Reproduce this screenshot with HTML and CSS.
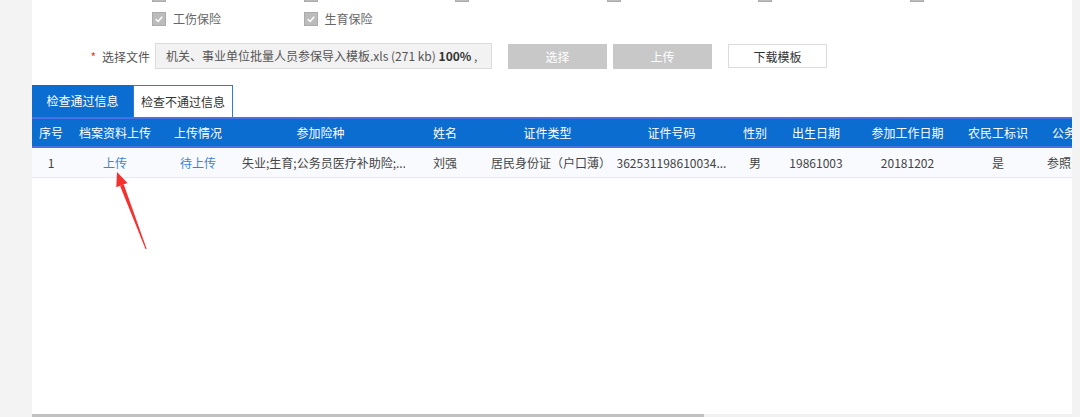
FILE: index.html
```html
<!DOCTYPE html>
<html lang="zh-CN">
<head>
<meta charset="utf-8">
<title>参保导入</title>
<link rel="stylesheet" href="styles.css">
</head>
<body>
<div class="page">
  <div class="gutter"></div>
  <main class="panel">
    <div class="checks">
      <span class="chk"><span class="box"><svg viewBox="0 0 13 13"><path d="M3 6.8 L5.5 9.2 L10 4" /></svg></span></span>
      <span class="chk"><span class="box"><svg viewBox="0 0 13 13"><path d="M3 6.8 L5.5 9.2 L10 4" /></svg></span></span>
      <span class="chk"><span class="box"><svg viewBox="0 0 13 13"><path d="M3 6.8 L5.5 9.2 L10 4" /></svg></span></span>
      <span class="chk"><span class="box"><svg viewBox="0 0 13 13"><path d="M3 6.8 L5.5 9.2 L10 4" /></svg></span></span>
      <span class="chk"><span class="box"><svg viewBox="0 0 13 13"><path d="M3 6.8 L5.5 9.2 L10 4" /></svg></span></span>
      <span class="chk"><span class="box"><svg viewBox="0 0 13 13"><path d="M3 6.8 L5.5 9.2 L10 4" /></svg></span></span>
      <label class="chk"><span class="box"><svg viewBox="0 0 13 13"><path d="M3 6.8 L5.5 9.2 L10 4" /></svg></span><span>工伤保险</span></label>
      <label class="chk"><span class="box"><svg viewBox="0 0 13 13"><path d="M3 6.8 L5.5 9.2 L10 4" /></svg></span><span>生育保险</span></label>
    </div>

    <div class="filerow">
      <div class="flabel"><span class="req">*</span>选择文件</div>
      <div class="finput">机关、事业单位批量人员参保导入模板.xls (271 kb) <b>100%</b> ,</div>
      <button class="btn btn-dis btn-first">选择</button>
      <button class="btn btn-dis">上传</button>
      <button class="btn btn-plain">下载模板</button>
    </div>

    <div class="tabs">
      <div class="tab tab-on">检查通过信息</div>
      <div class="tab tab-off">检查不通过信息</div>
    </div>

    <div class="tablewrap">
      <table class="grid">
        <colgroup>
          <col class="w38"><col class="w90"><col class="w76"><col class="w169"><col class="w80"><col class="w125"><col class="w123"><col class="w44"><col class="w78"><col class="w105"><col class="w76"><col class="w110">
        </colgroup>
        <thead>
          <tr>
            <th>序号</th><th>档案资料上传</th><th>上传情况</th><th>参加险种</th><th>姓名</th><th>证件类型</th><th>证件号码</th><th>性别</th><th>出生日期</th><th>参加工作日期</th><th>农民工标识</th><th class="left">公务员类别</th>
          </tr>
        </thead>
        <tbody>
          <tr>
            <td>1</td><td><a class="lnk">上传</a></td><td><a class="lnk">待上传</a></td><td>失业;生育;公务员医疗补助险;...</td><td>刘强</td><td>居民身份证（户口薄）</td><td>362531198610034...</td><td>男</td><td>19861003</td><td>20181202</td><td>是</td><td class="left">参照公务员法管理</td>
          </tr>
        </tbody>
      </table>
    </div>

    <div class="spacer"></div>
    <div class="hscroll"><div class="thumb"></div></div>

    <svg class="arrow" width="60" height="100" viewBox="100 160 60 100">
      <polygon points="117,172 116.3,187.2 127.5,183.0" fill="#f5302f"/>
      <polygon points="120.0,185.8 123.8,184.4 146.6,248.8 145.6,249.2" fill="#f5302f"/>
    </svg>
  </main>
  <div class="rgutter"></div>
</div>
</body>
</html>
```
FILE: styles.css
```css
* { box-sizing: border-box; }
html, body {
  margin: 0;
  padding: 0;
  width: 1080px;
  height: 417px;
  overflow: hidden;
  background: #f3f3f3;
  font-family: "Noto Sans CJK SC", "Noto Sans", sans-serif;
  font-size: 12px;
  color: #444;
}
.page {
  display: flex;
  width: 1080px;
  height: 417px;
}
.gutter { width: 32px; flex: none; background: #f3f3f3; }
.rgutter { width: 8px; flex: none; background: #f3f3f3; }
.panel {
  position: relative;
  width: 1040px;
  flex: none;
  background: #fff;
  display: flex;
  flex-direction: column;
  overflow: hidden;
}

/* checkbox grid */
.checks {
  margin-top: -12px;
  padding-left: 120px;
  display: grid;
  grid-template-columns: repeat(6, 151.6px);
  row-gap: 11px;
}
.chk {
  display: flex;
  align-items: center;
  height: 13px;
  gap: 7px;
  color: #666;
  line-height: 13px;
}
.box {
  width: 14px;
  height: 14px;
  flex: none;
  background: #bcbcbc;
  border: 1px solid #ababab;
  display: flex;
}
.box svg { width: 12px; height: 12px; }
.box path { fill: none; stroke: #fff; stroke-width: 1.6; }

/* file row */
.filerow {
  margin-top: 18px;
  display: flex;
  align-items: center;
  height: 26px;
}
.flabel {
  width: 118px;
  margin-right: 5px;
  text-align: right;
  color: #555;
}
.req { color: #e4393c; margin-right: 6px; }
.finput {
  width: 337px;
  height: 26px;
  line-height: 24px;
  padding-left: 10px;
  background: #f2f2f2;
  border: 1px solid #dcdcdc;
  color: #555;
  white-space: nowrap;
  overflow: hidden;
}
.finput b { color: #333; }
.btn {
  width: 99px;
  height: 25px;
  font-family: inherit;
  font-size: 12px;
  padding: 0;
  border: 0;
}
.btn-first { margin-left: 16px; }
.btn-dis { background: #c8c8c8; color: #fff; margin-right: 6px; }
.btn-plain {
  margin-left: 10px;
  height: 24px;
  background: #fff;
  border: 1px solid #dcdcdc;
  color: #333;
}

/* tabs */
.tabs {
  margin-top: 16px;
  display: flex;
  height: 32px;
}
.tab {
  height: 32px;
  line-height: 31px;
  text-align: center;
  white-space: nowrap;
}
.tab-on { width: 101px; background: #0b6dcf; color: #fff; }
.tab-off {
  width: 100px;
  background: #fff;
  color: #333;
  border: 1px solid #2f7ad4;
  border-bottom: 0;
}

/* table */
.tablewrap { width: 1040px; overflow: hidden; }
.grid {
  border-collapse: collapse;
  table-layout: fixed;
  width: 1114px;
}
.w38 { width: 38px; } .w90 { width: 90px; } .w76 { width: 76px; }
.w169 { width: 169px; } .w80 { width: 80px; } .w125 { width: 125px; }
.w123 { width: 123px; } .w44 { width: 44px; } .w78 { width: 78px; }
.w105 { width: 105px; } .w110 { width: 110px; }
.grid th {
  height: 29px;
  background: #0b6dcf;
  color: #fff;
  font-weight: normal;
  border-top: 2px solid #4a70e6;
  border-bottom: 2px solid #4a70e6;
  padding: 0 6px;
  white-space: nowrap;
  overflow: hidden;
}
.grid td {
  height: 30px;
  background: #f8fafd;
  border-bottom: 1px solid #e6e8ec;
  text-align: center;
  padding: 0 6px;
  white-space: nowrap;
  overflow: hidden;
  color: #444;
}
.grid .left { text-align: left; padding-left: 16px; }
.grid td.left { padding-left: 11px; }
.lnk { color: #3d84d6; }

.spacer { flex: 1; }
.hscroll {
  height: 3px;
  background: #f1f1f1;
}
.thumb {
  width: 672px;
  height: 3px;
  background: #c1c1c1;
}

.arrow {
  position: absolute;
  left: 68px;
  top: 160px;
}
```
